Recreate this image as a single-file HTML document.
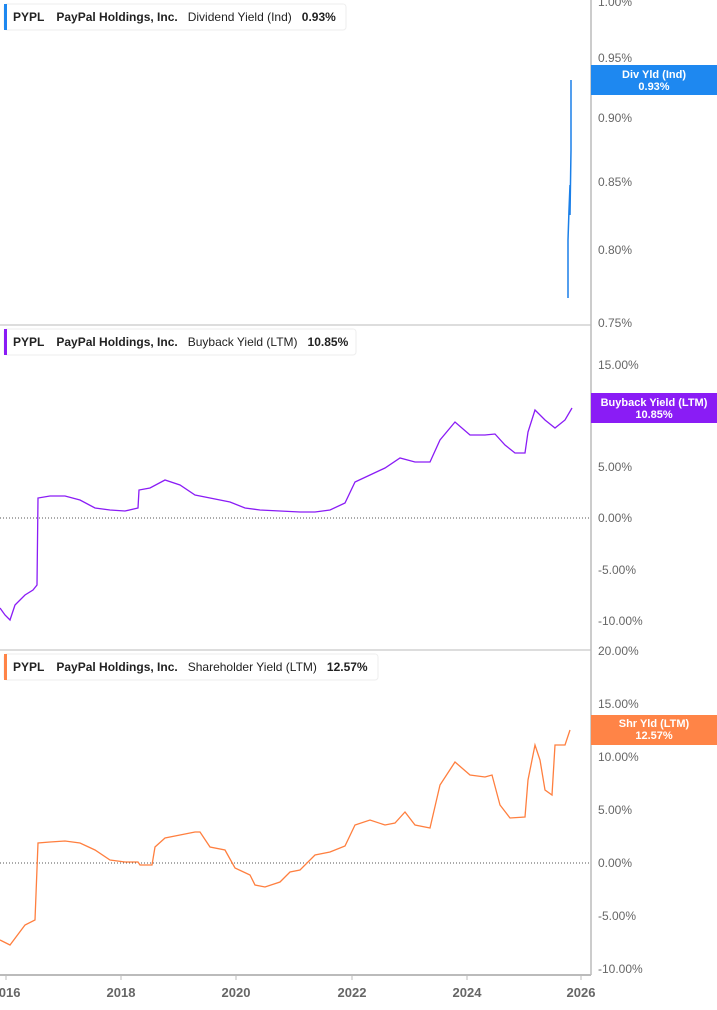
<!DOCTYPE html>
<html><head><meta charset="utf-8"><style>
body{margin:0;background:#fff;width:717px;height:1005px;overflow:hidden;font-family:"Liberation Sans",sans-serif}
svg text{font-family:"Liberation Sans",sans-serif}
</style></head><body>
<svg width="717" height="1005" viewBox="0 0 717 1005" xmlns="http://www.w3.org/2000/svg">
<line x1="591" y1="0" x2="591" y2="975" stroke="#999" stroke-width="1"/>
<line x1="0" y1="325" x2="591" y2="325" stroke="#bbb"/>
<line x1="0" y1="650" x2="591" y2="650" stroke="#bbb"/>
<line x1="0" y1="975" x2="591" y2="975" stroke="#bbb" stroke-width="2"/>
<line x1="0" y1="518" x2="591" y2="518" stroke="#555" stroke-dasharray="1,2"/>
<line x1="0" y1="863" x2="591" y2="863" stroke="#555" stroke-dasharray="1,2"/>
<g fill="#666" font-size="12">
<text x="598" y="6">1.00%</text><text x="598" y="62">0.95%</text><text x="598" y="122">0.90%</text><text x="598" y="186">0.85%</text><text x="598" y="254">0.80%</text><text x="598" y="327">0.75%</text>
<text x="598" y="369">15.00%</text><text x="598" y="420">10.00%</text><text x="598" y="471">5.00%</text><text x="598" y="522">0.00%</text><text x="598" y="574">-5.00%</text><text x="598" y="625">-10.00%</text>
<text x="598" y="655">20.00%</text><text x="598" y="708">15.00%</text><text x="598" y="761">10.00%</text><text x="598" y="814">5.00%</text><text x="598" y="867">0.00%</text><text x="598" y="920">-5.00%</text><text x="598" y="973">-10.00%</text>
</g>
<g fill="#666" font-size="13" font-weight="bold" text-anchor="middle">
<text x="6" y="997">2016</text><text x="121" y="997">2018</text><text x="236" y="997">2020</text><text x="352" y="997">2022</text><text x="467" y="997">2024</text><text x="581" y="997">2026</text>
</g>
<g stroke="#bbb"><line x1="6" y1="975" x2="6" y2="980"/><line x1="121" y1="975" x2="121" y2="980"/><line x1="236" y1="975" x2="236" y2="980"/><line x1="352" y1="975" x2="352" y2="980"/><line x1="467" y1="975" x2="467" y2="980"/><line x1="581" y1="975" x2="581" y2="980"/></g>
<polyline fill="none" stroke="#1a7fe8" stroke-width="1.5" points="568,298 568,240 569,210 570,185 570,215 571,150 571,80"/>
<polyline fill="none" stroke="#8a1cf5" stroke-width="1.3" points="0,608 5,615 10,620 15,605 25,595 33,590 37,585 38,498 50,496 65,496 80,500 95,508 110,510 125,511 138,508 139,490 150,488 165,480 180,485 195,495 210,498 230,502 245,508 260,510 280,511 300,512 315,512 330,510 345,503 355,482 370,475 385,468 400,458 415,462 430,462 440,440 455,422 470,435 485,435 495,434 505,445 515,453 525,453 528,432 535,410 545,420 555,428 565,420 572,408"/>
<polyline fill="none" stroke="#ff7f3f" stroke-width="1.3" points="0,940 10,945 25,925 35,920 38,843 50,842 65,841 80,843 95,850 110,860 125,862 138,862 140,865 152,865 155,847 165,838 180,835 195,832 200,832 210,847 225,850 235,868 250,875 255,885 265,887 280,882 290,872 300,870 315,855 330,852 345,846 355,825 370,820 385,825 395,823 405,812 415,825 430,828 440,785 455,762 470,775 485,777 492,775 500,805 510,818 525,817 528,780 535,745 540,760 545,790 552,795 555,745 565,745 570,730"/>
<rect x="591" y="65" width="126" height="30" fill="#1e88f0"/>
<text x="654" y="78" fill="#fff" font-size="11" font-weight="bold" text-anchor="middle">Div Yld (Ind)</text>
<text x="654" y="90" fill="#fff" font-size="11" font-weight="bold" text-anchor="middle">0.93%</text>
<rect x="591" y="393" width="126" height="30" fill="#8a1cf5"/>
<text x="654" y="406" fill="#fff" font-size="11" font-weight="bold" text-anchor="middle">Buyback Yield (LTM)</text>
<text x="654" y="418" fill="#fff" font-size="11" font-weight="bold" text-anchor="middle">10.85%</text>
<rect x="591" y="715" width="126" height="30" fill="#ff8447"/>
<text x="654" y="727" fill="#fff" font-size="11" font-weight="bold" text-anchor="middle">Shr Yld (LTM)</text>
<text x="654" y="739" fill="#fff" font-size="11" font-weight="bold" text-anchor="middle">12.57%</text>
<g font-size="12" font-weight="bold" fill="#222">
<rect x="4" y="4" width="342" height="26" rx="3" fill="#fff" stroke="#eee"/><rect x="4" y="4" width="3" height="26" fill="#1e88f0"/>
<text x="13" y="21">PYPL<tspan dx="12">PayPal Holdings, Inc.</tspan><tspan dx="10" font-weight="normal">Dividend Yield (Ind)</tspan><tspan dx="10">0.93%</tspan></text>
<rect x="4" y="329" width="352" height="26" rx="3" fill="#fff" stroke="#eee"/><rect x="4" y="329" width="3" height="26" fill="#8a1cf5"/>
<text x="13" y="346">PYPL<tspan dx="12">PayPal Holdings, Inc.</tspan><tspan dx="10" font-weight="normal">Buyback Yield (LTM)</tspan><tspan dx="10">10.85%</tspan></text>
<rect x="4" y="654" width="374" height="26" rx="3" fill="#fff" stroke="#eee"/><rect x="4" y="654" width="3" height="26" fill="#ff8447"/>
<text x="13" y="671">PYPL<tspan dx="12">PayPal Holdings, Inc.</tspan><tspan dx="10" font-weight="normal">Shareholder Yield (LTM)</tspan><tspan dx="10">12.57%</tspan></text>
</g>
</svg>
</body></html>
